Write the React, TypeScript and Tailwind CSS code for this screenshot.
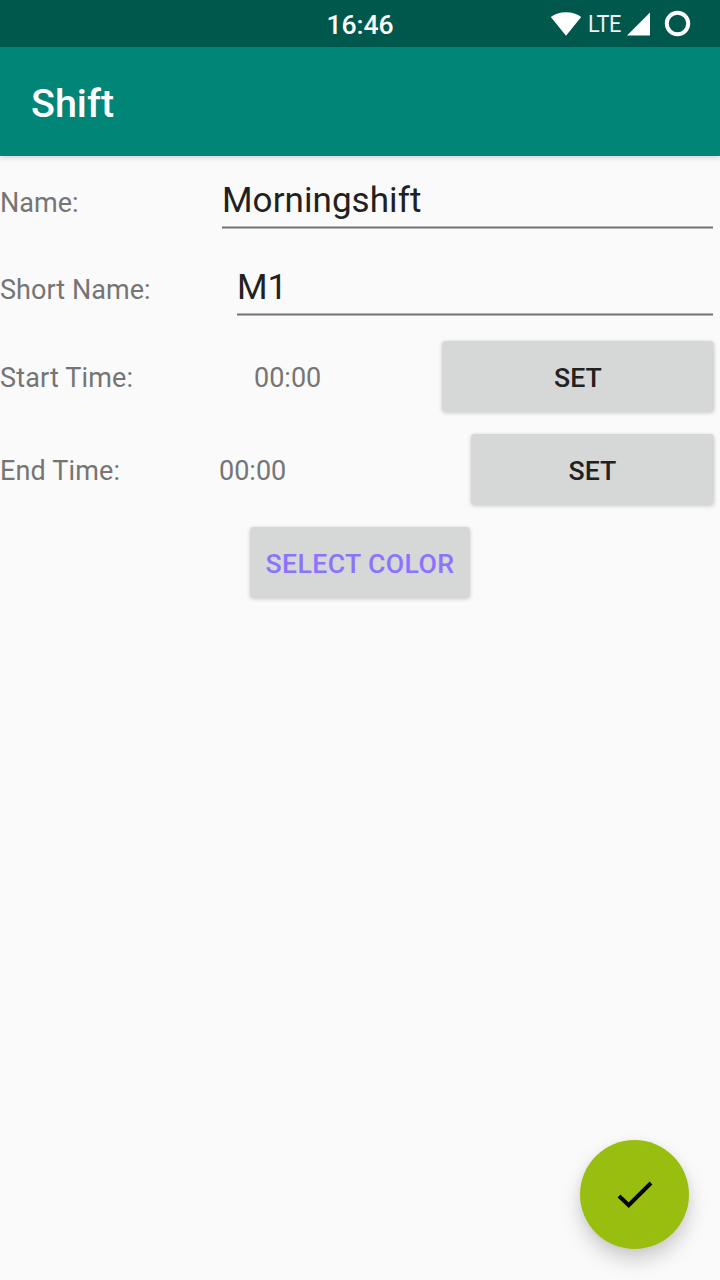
import React from "react";

function Field({ name, value, width }: { name: string; value: string; width: string }) {
  return (
    <div className="flex h-[87px] items-start justify-between pr-[7px]">
      <span className="pt-[29px] text-[27px] leading-9 tracking-[0.04px] whitespace-nowrap text-[#757575]">{name}</span>
      <div className={`${width} flex flex-col pt-[23px] text-[35px] leading-[44px] tracking-[0.06px] text-[#212121]`}>
        <span className="h-[47px]">{value}</span>
        <div className="h-[3px] border-y border-[#b4b4b4] bg-[#737373]" />
      </div>
    </div>
  );
}

function TimeRow({ name, nameWidth, timeWidth, buttonWidth }: { name: string; nameWidth: string; timeWidth: string; buttonWidth: string }) {
  return (
    <div className="flex h-[93px] items-center pr-[6px] text-[27px] text-[#757575]">
      <span className={`${nameWidth} pt-[3px] tracking-[0.14px]`}>{name}</span>
      <span className={`${timeWidth} pt-[3px]`}>00:00</span>
      <Button className={`${buttonWidth} text-[#212121]`}>SET</Button>
    </div>
  );
}

function Button({ children, className }: { children: string; className: string }) {
  return (
    <button className={`h-[71px] rounded-[4px] bg-[#d6d8d7] pt-[2px] text-[26.7px] leading-9 font-medium shadow-[0_1px_4px_rgba(0,0,0,0.2)] ${className}`}>
      {children}
    </button>
  );
}

export default function App() {
  return (
    <div className="flex h-[1280px] w-[720px] flex-col overflow-hidden bg-[#fafafa] font-['Roboto',sans-serif]">
      <div className="relative z-10 grid h-[47px] shrink-0 grid-cols-[1fr_70px_1fr] items-center bg-[#00574b] text-white">
        <span />
        <span className="pt-[3px] text-center text-[26.6px] font-medium tracking-[-0.1px]">16:46</span>
        <div className="flex items-center justify-end pr-[29px]">
          <svg width="32" height="26" viewBox="0 0 32 26" fill="white"><path d="M.8 6C8-.4 24-.4 31.2 6L16 24.8Z" /></svg>
          <span className="ml-[6px] w-[38px] origin-left scale-x-[0.91] text-[23.8px] leading-7 tracking-[-0.4px] text-[#f0f0f5]">LTE</span>
          <svg width="24" height="24" viewBox="0 0 24 24" fill="white"><path d="M24 .5V23.5H1Z" /></svg>
          <svg className="ml-[14px]" width="27" height="27" viewBox="0 0 27 27" fill="none" stroke="white" strokeWidth="4"><circle cx="13.5" cy="13.5" r="10.7" /></svg>
        </div>
      </div>
      <header className="flex h-[109px] shrink-0 items-center bg-[#008577] pt-[5px] pl-[31px] text-[39.5px] font-medium text-white shadow-[0_1px_6px_rgba(0,0,0,0.2)]">Shift</header>
      <main className="flex flex-1 flex-col">
        <Field name="Name:" value="Morningshift" width="w-[491px]" />
        <Field name="Short Name:" value="M1" width="w-[476px]" />
        <TimeRow name="Start Time:" nameWidth="w-[254px]" timeWidth="w-[188px]" buttonWidth="w-[272px]" />
        <TimeRow name="End Time:" nameWidth="w-[219px]" timeWidth="w-[252px]" buttonWidth="w-[243px]" />
        <div className="flex h-[93px] items-center justify-center">
          <Button className="w-[220px] tracking-[0.35px] text-[#8c73ff]">SELECT COLOR</Button>
        </div>
        <button aria-label="Save" className="mt-auto mr-[31px] mb-[31px] flex size-[109px] items-center justify-center self-end rounded-full bg-[#98be10] shadow-[0_11px_20px_rgba(0,0,0,0.18),0_1px_8px_rgba(0,0,0,0.05)]">
          <svg width="39" height="31" viewBox="0 0 39 31" fill="none" stroke="black" strokeWidth="4"><path d="M4 17 13.7 26.2 36 4" /></svg>
        </button>
      </main>
    </div>
  );
}
